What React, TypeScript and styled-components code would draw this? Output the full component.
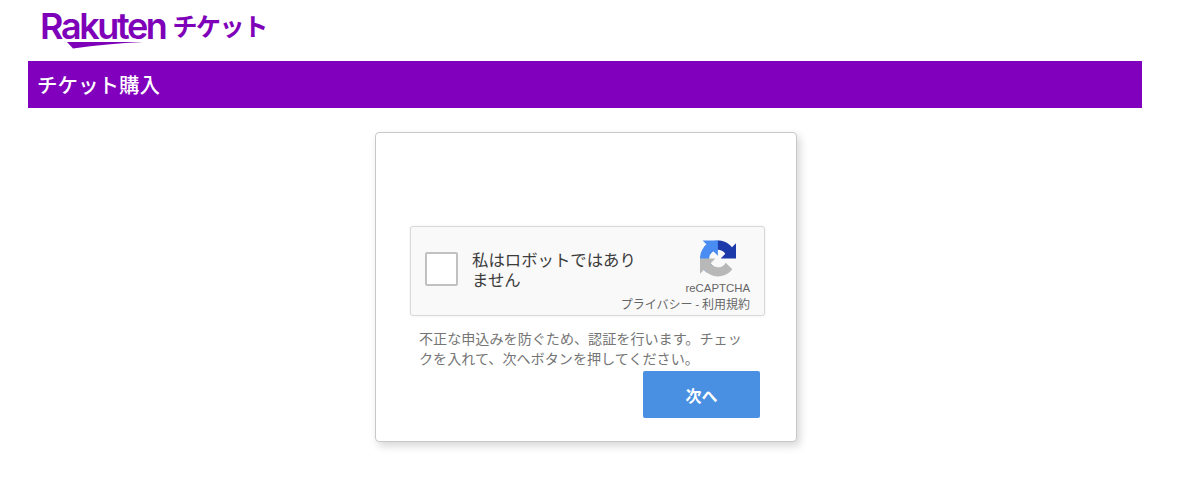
import styled, { createGlobalStyle } from 'styled-components'

const GlobalStyle = createGlobalStyle`
  html, body {
    margin: 0;
    background: #fff;
  }
  body {
    font-family: 'Liberation Sans', 'Noto Sans CJK JP', sans-serif;
  }
`

const Page = styled.div`
  width: 1200px;
  height: 478px;
  overflow: hidden;
  padding: 0 58px 0 28px;
  box-sizing: border-box;
`

const LogoRow = styled.header`
  height: 61px;
  padding: 7px 0 0 12px;
  box-sizing: border-box;
`

const Logo = styled.div`
  position: relative;
  display: inline-flex;
  align-items: flex-start;
  color: #7e00b9;
  height: 40px;
  svg {
    position: absolute;
    left: 27px;
    top: 35px;
  }
`

const LogoWord = styled.span`
  font-family: 'Inter', 'Liberation Sans', sans-serif;
  font-size: 36px;
  line-height: 39px;
  font-weight: 600;
  letter-spacing: -2.4px;
`

const LogoKana = styled.span`
  font-family: 'Noto Sans CJK JP', sans-serif;
  font-size: 25px;
  line-height: 39px;
  font-weight: 700;
  letter-spacing: -1.4px;
  margin: -1px 0 0 7px;
`

const TitleBar = styled.h1`
  margin: 0;
  height: 47px;
  background: #8000bd;
  color: #fff;
  font-family: 'Noto Sans CJK JP', sans-serif;
  font-size: 20.5px;
  font-weight: 500;
  line-height: 47px;
  padding-left: 9px;
`

const Main = styled.main`
  padding: 24px 0 0 347px;
`

const Card = styled.section`
  width: 422px;
  height: 310px;
  box-sizing: border-box;
  background: #fff;
  border: 1px solid #c8c8c8;
  border-radius: 4px;
  box-shadow: 3px 4px 8px rgba(0, 0, 0, 0.16);
  padding: 93px 30px 0 34px;
`

const Captcha = styled.div`
  width: 355px;
  height: 90px;
  box-sizing: border-box;
  background: #f9f9f9;
  border: 1px solid #d8d8d8;
  border-radius: 3px;
  box-shadow: 0 0 3px rgba(0, 0, 0, 0.08);
  display: flex;
  position: relative;
  padding: 25px 0 0 14px;
`

const CheckBox = styled.div`
  width: 33px;
  height: 34px;
  box-sizing: border-box;
  background: #fff;
  border: 2px solid #c1c1c1;
  border-radius: 2px;
`

const CaptchaLabel = styled.div`
  width: 172px;
  margin: -3px 0 0 14px;
  font-family: 'Noto Sans CJK JP', sans-serif;
  font-size: 16.4px;
  line-height: 20px;
  color: #3c3c3c;
`

const Badge = styled.div`
  position: absolute;
  right: 14px;
  top: 13px;
  display: flex;
  flex-direction: column;
  align-items: flex-end;
  color: #666;
`

const BadgeMark = styled.svg`
  width: 36px;
  height: 37px;
  margin-right: 14px;
`

const BadgeName = styled.span`
  font-family: 'Liberation Sans', sans-serif;
  font-size: 11.4px;
  line-height: 14px;
  margin-top: 4px;
`

const BadgeLinks = styled.span`
  font-family: 'Noto Sans CJK JP', sans-serif;
  font-size: 12px;
  line-height: 16px;
  margin-top: 1px;
  white-space: nowrap;
`

const Notice = styled.p`
  margin: 12px 0 0 9px;
  width: 330px;
  font-family: 'Noto Sans CJK JP', sans-serif;
  font-size: 14.1px;
  line-height: 20px;
  color: #757575;
`

const Actions = styled.div`
  display: flex;
  justify-content: flex-end;
  margin-top: 3px;
`

const NextButton = styled.button`
  width: 117px;
  height: 47px;
  border: 0;
  border-radius: 2px;
  background: #4a90e2;
  color: #fff;
  font-family: 'Noto Sans CJK JP', sans-serif;
  font-size: 16px;
  font-weight: 700;
  margin-right: 6px;
`

export default function App() {
  return (
    <Page>
      <GlobalStyle />
      <LogoRow>
        <Logo>
          <LogoWord>Rakuten</LogoWord>
          <LogoKana>チケット</LogoKana>
          <svg width="77" height="7" viewBox="0 0 77 7">
            <path d="M0 0 L76 0 Q40 1.5 6 6.5 Z" fill="#7e00b9" />
          </svg>
        </Logo>
      </LogoRow>
      <TitleBar>チケット購入</TitleBar>
      <Main>
        <Card>
          <Captcha>
            <CheckBox />
            <CaptchaLabel>私はロボットではありません</CaptchaLabel>
            <Badge>
              <BadgeMark viewBox="0 0 64 64">
                <path d="M64 31.955l-.033-1.37V4.687l-7.16 7.16C50.948 4.674 42.033.093 32.05.093c-10.4 0-19.622 4.96-25.458 12.64l11.736 11.86a15.55 15.55 0 0 1 4.754-5.334c2.05-1.6 4.952-2.906 8.968-2.906.485 0 .86.057 1.135.163 4.976.393 9.288 3.14 11.828 7.124l-8.307 8.307c10.522-.04 22.4-.066 27.295.005" fill="#1c3aa9" />
                <path d="M31.862.001l-1.37.033H4.594l7.16 7.16C4.58 13.05 0 21.967 0 31.95c0 10.4 4.96 19.622 12.64 25.458l11.86-11.736a15.55 15.55 0 0 1-5.334-4.754c-1.6-2.05-2.906-4.952-2.906-8.968 0-.485.057-.86.163-1.135.393-4.976 3.14-9.288 7.124-11.828l8.307 8.307c-.04-10.522-.066-22.4.005-27.295" fill="#4a8df2" />
                <path d="M.001 32l.033 1.37v25.898l7.16-7.16c5.857 7.173 14.77 11.754 24.755 11.754 10.4 0 19.622-4.96 25.458-12.64l-11.736-11.86a15.55 15.55 0 0 1-4.754 5.334c-2.05 1.6-4.952 2.906-8.968 2.906-.485 0-.86-.057-1.135-.163-4.976-.393-9.288-3.14-11.828-7.124l8.307-8.307c-10.522.04-22.4.066-27.295-.005" fill="#b8b8b8" />
              </BadgeMark>
              <BadgeName>reCAPTCHA</BadgeName>
              <BadgeLinks>プライバシー - 利用規約</BadgeLinks>
            </Badge>
          </Captcha>
          <Notice>不正な申込みを防ぐため、認証を行います。チェックを入れて、次へボタンを押してください。</Notice>
          <Actions>
            <NextButton>次へ</NextButton>
          </Actions>
        </Card>
      </Main>
    </Page>
  )
}
